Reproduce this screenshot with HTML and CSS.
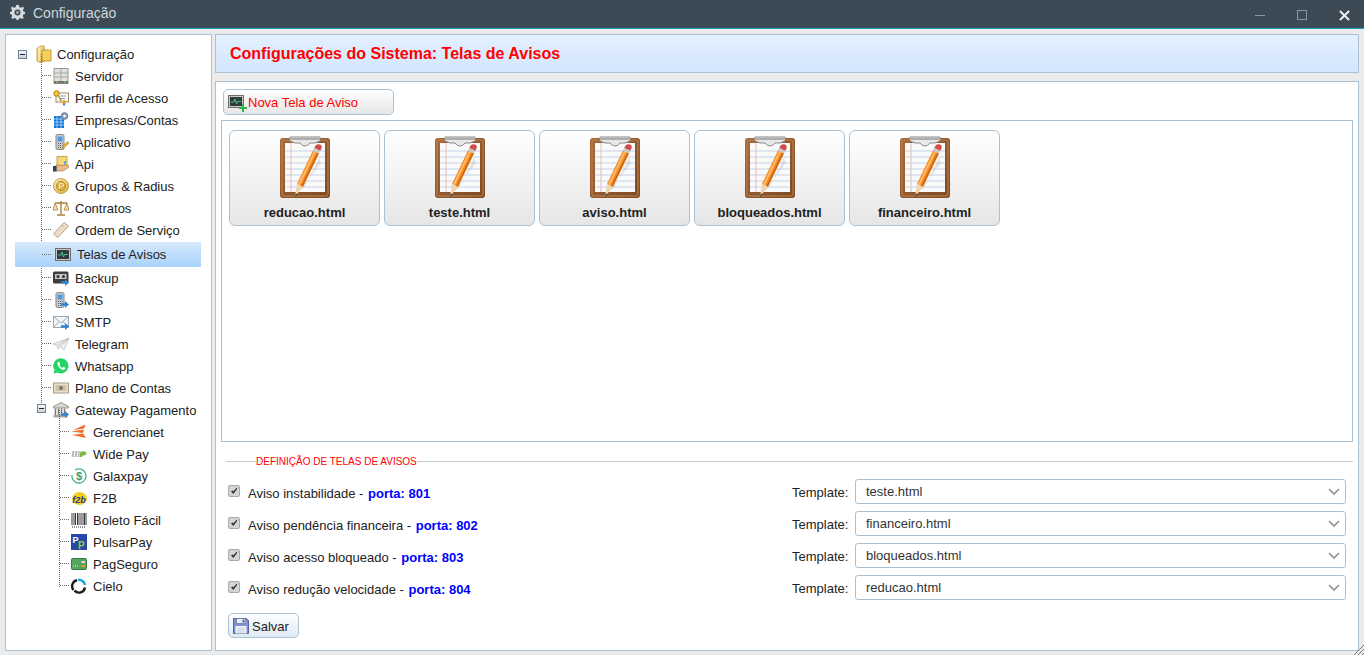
FILE: index.html
```html
<!DOCTYPE html>
<html lang="pt-BR">
<head>
    <meta charset="UTF-8">
    <meta name="viewport" content="width=device-width, initial-scale=1.0">
    <title>Configuração</title>
    <link rel="stylesheet" href="styles.css">
</head>
<body>
    <svg class="defs" width="0" height="0">
        <defs>
            <linearGradient id="wood" x1="0" y1="0" x2="1" y2="1">
                <stop offset="0" stop-color="#a8693a"/>
                <stop offset="1" stop-color="#7f4a22"/>
            </linearGradient>
            <linearGradient id="gold" x1="0" y1="0" x2="1" y2="1">
                <stop offset="0" stop-color="#fdeeb0"/>
                <stop offset="1" stop-color="#e0ae3c"/>
            </linearGradient>
            <symbol id="i-clipboard" viewBox="0 0 50 62">
                <rect x="0" y="2" width="50" height="60" rx="3" fill="url(#wood)"/>
                <rect x="2" y="4" width="46" height="56" rx="2" fill="none" stroke="#bb8654" stroke-width="1"/>
                <rect x="5" y="7" width="40" height="49" fill="#fafafa"/>
                <path d="M5 15H45M5 21H45M5 27H45M5 33H45M5 39H45M5 45H45M5 51H45" stroke="#c3d2ea" stroke-width="1"/>
                <path d="M11 7V56" stroke="#efb6b6" stroke-width="1"/>
                <path d="M10 1H40V5L35 7H30Q28 10 25 10Q22 10 20 7H15L10 5Z" fill="#e8e8e8" stroke="#8a8a8a" stroke-width="1"/>
                <path d="M11 3H39" stroke="#9a9a9a" stroke-width="1.500"/>
                <path d="M39 22L24 52L19 55L41 27" fill="#bdbdbd" opacity="0.4"/>
                <path d="M33 14.500L39 17.500L23 51L17 48Z" fill="#f58a1e"/>
                <path d="M35 15.500L19 48.700" stroke="#ffba6c" stroke-width="2"/>
                <path d="M38 17L22 50.500" stroke="#c9650f" stroke-width="1.500"/>
                <path d="M17 48L23 51L15 60.500Z" fill="#f0d7ae"/>
                <path d="M15.800 57.500L17.500 58.300L15 61.500Z" fill="#3a3a3a"/>
                <path d="M33 14.500L34.300 11.800L40.300 14.800L39 17.500Z" fill="#c8c8c8"/>
                <path d="M34.300 11.800L36 9Q39 7.500 41.500 9.500Q42.500 12 40.300 14.800Z" fill="#cf4b4b"/>
            </symbol>
            <symbol id="i-gear" viewBox="0 0 16 16">
                <path d="M6.500 0H9.500L10 2.300L11.800 3L13.700 1.700L15 3.500L13.700 5.300L14.300 7L16 7.500V9.500L14.200 10L13.500 11.800L14.700 13.700L13 15L11.200 13.800L9.500 14.400L9 16H7L6.500 14.400L4.700 13.800L3 15L1.300 13.700L2.500 11.800L1.800 10L0 9.500V7.500L1.700 7L2.300 5.300L1 3.500L2.300 1.700L4.200 3L6 2.300Z" fill="#d8dcdf"/>
                <circle cx="8" cy="8" r="3.200" fill="#3c4a54"/>
                <circle cx="8" cy="8" r="1.500" fill="#aab0b4"/>
            </symbol>
            <symbol id="i-folders" viewBox="0 0 16 18">
                <path d="M1 3L5 1H8L8.500 16L5 17.500L1 16Z" fill="url(#gold)" stroke="#b98a1e" stroke-width="0.800"/>
                <path d="M6 5H15V16H6Z" fill="#f5cf62" stroke="#b98a1e" stroke-width="0.800"/>
                <path d="M3 2V16" stroke="#fff6cf" stroke-width="1"/>
            </symbol>
            <symbol id="i-server" viewBox="0 0 16 16">
                <rect x="1" y="0.500" width="14" height="15" fill="#e2e2de" stroke="#97978f"/>
                <path d="M8 1V13M1 5H15M1 9H15" stroke="#a8a8a2"/>
                <rect x="1" y="13" width="14" height="2.500" fill="#74756e"/>
                <path d="M3 14H5M11 14H13" stroke="#8fdc6a"/>
            </symbol>
            <symbol id="i-cert" viewBox="0 0 16 16">
                <rect x="3" y="3" width="12.500" height="9" fill="#fbfbfb" stroke="#a08b63"/>
                <path d="M7 6H13M7 8.500H12" stroke="#7d9fc8"/>
                <circle cx="3.500" cy="3.500" r="2.700" fill="#f3c73e" stroke="#a67c10"/>
                <path d="M5 5.500L8 10L7 11" stroke="#b58c1a" stroke-width="1.300" fill="none"/>
                <circle cx="11" cy="12" r="2" fill="#e9a722"/>
                <path d="M10 13.500V16L11 15L12 16V13.500" fill="#3a7bc8"/>
            </symbol>
            <symbol id="i-building" viewBox="0 0 16 16">
                <rect x="1" y="4" width="10" height="12" fill="#0f73d6"/>
                <path d="M1 7H11M1 10H11M1 13H11M4 4V16M8 4V16" stroke="#b5dbfa" stroke-width="0.800"/>
                <circle cx="11.500" cy="4" r="3.300" fill="#8fa6bd" stroke="#5f7890"/>
                <circle cx="11.500" cy="4" r="1.200" fill="#fff"/>
            </symbol>
            <symbol id="i-phone" viewBox="0 0 16 16">
                <rect x="3" y="0.500" width="8" height="15" rx="1.500" fill="#c9cbce" stroke="#85878a"/>
                <rect x="4.500" y="2.500" width="5" height="5" fill="#4b9ee0"/>
                <path d="M5 9.500H6M7 9.500H8M9 9.500H9.500M5 11.500H6M7 11.500H8M9 11.500H9.500M5 13.500H6M7 13.500H8M9 13.500H9.500" stroke="#5d5f62"/>
            </symbol>
            <symbol id="i-pencil" viewBox="0 0 16 16">
                <path d="M9 15L10 12L14.500 7.500L16 9L11.500 13.500Z" fill="#f1b532" stroke="#9a6d14" stroke-width="0.500"/>
            </symbol>
            <symbol id="i-api" viewBox="0 0 16 16">
                <path d="M4 0.500H14V10H4Z" fill="#f4d77c" stroke="#c5a445"/>
                <path d="M3 9L8 9.500L15 9L16 11L10 15H3Z" fill="#f0b98a" stroke="#a36f40" stroke-width="0.600"/>
                <rect x="0" y="10" width="3.500" height="5.500" fill="#2e3f63"/>
                <path d="M12 5V8.500" stroke="#6aa3dc" stroke-width="2"/>
            </symbol>
            <symbol id="i-coin" viewBox="0 0 16 16">
                <circle cx="8" cy="8" r="7.500" fill="url(#gold)" stroke="#b8902f" stroke-width="0.800"/>
                <circle cx="8" cy="8" r="4.500" fill="#d9ae4c" stroke="#a98224" stroke-width="0.800"/>
                <path d="M6.500 11V5.500H9Q10.500 5.500 10.500 7T9 8.500H6.500" fill="none" stroke="#f6e6ae" stroke-width="1.100"/>
            </symbol>
            <symbol id="i-scales" viewBox="0 0 16 16">
                <path d="M8 1V14M4 15H12M2 3H14" stroke="#a7803c" stroke-width="1.400"/>
                <path d="M2 3L0 10H5ZM14 3L11 10H16Z" fill="#f3dfa8" stroke="#a7803c" stroke-width="0.800"/>
            </symbol>
            <symbol id="i-ticket" viewBox="0 0 16 16">
                <path d="M11 0.500L15.500 4L5 15.500L0.500 12Z" fill="#ecdccb" stroke="#b9a48e"/>
                <path d="M9 3L13 7" stroke="#b9a48e" stroke-dasharray="1 1"/>
            </symbol>
            <symbol id="i-monitor" viewBox="0 0 16 16">
                <rect x="0.500" y="1.500" width="15" height="12" fill="#c9c9c9" stroke="#6d6d6d"/>
                <rect x="2" y="3" width="12" height="9" fill="#2f3b3c"/>
                <path d="M3 8H6L7 5L8.500 10L9.500 7.500H13" fill="none" stroke="#58d79a" stroke-width="0.800"/>
            </symbol>
            <symbol id="i-arrow" viewBox="0 0 8 7">
                <path d="M0 2.200H4V0L8 3.500L4 7V4.800H0Z" fill="#2d86d8"/>
            </symbol>
            <symbol id="i-backup" viewBox="0 0 16 16">
                <rect x="0" y="1.500" width="15.500" height="12" rx="1.500" fill="#3d3d3d"/>
                <rect x="2" y="4" width="11.500" height="5" fill="#c6c6c6"/>
                <circle cx="5" cy="6.500" r="1.500" fill="#333"/>
                <circle cx="10.500" cy="6.500" r="1.500" fill="#333"/>
            </symbol>
            <symbol id="i-mail" viewBox="0 0 16 16">
                <rect x="0.500" y="2.500" width="15" height="11" fill="#f3f6fa" stroke="#9fa9b5"/>
                <path d="M1 3L8 9L15 3M1 13L6 7.500M15 13L10 7.500" fill="none" stroke="#9fa9b5"/>
            </symbol>
            <symbol id="i-plane" viewBox="0 0 16 16">
                <path d="M0 8L16 2L11 14L7 10.500L5 13L4.500 9.500Z" fill="#eef0ee" stroke="#b3b9b3" stroke-width="0.700"/>
                <path d="M4.500 9.500L16 2L7 10.500" fill="none" stroke="#b3b9b3" stroke-width="0.700"/>
            </symbol>
            <symbol id="i-whatsapp" viewBox="0 0 16 16">
                <path d="M8 0.300A7.600 7.600 0 1 1 4.300 14.600L0.500 15.700L1.500 12A7.600 7.600 0 0 1 8 0.300Z" fill="#25d366"/>
                <path d="M5.600 3.800C4.700 4.300 4.200 5.300 4.500 6.500C5.100 9 7.200 11.100 9.700 11.700C10.900 12 12 11.400 12.400 10.400C12.500 10.100 12.400 9.900 12.200 9.800L10.500 9C10.200 8.900 10 9 9.900 9.200L9.400 9.800C8.100 9.300 7 8.200 6.400 6.900L7 6.300C7.200 6.100 7.200 5.900 7.100 5.700L6.300 4C6.200 3.700 5.900 3.600 5.600 3.800Z" fill="#fff"/>
            </symbol>
            <symbol id="i-money" viewBox="0 0 16 16">
                <rect x="0.500" y="3" width="15" height="10" fill="#e8e0cf" stroke="#a69a84"/>
                <rect x="2.500" y="5" width="11" height="6" fill="#cfc4ab"/>
                <circle cx="8" cy="8" r="2" fill="#7f7661"/>
            </symbol>
            <symbol id="i-bank" viewBox="0 0 16 16">
                <path d="M8 0.500L15.500 4.500V6H0.500V4.500Z" fill="#d9d6cf" stroke="#77746d" stroke-width="0.700"/>
                <path d="M2.500 6.500V13M5.500 6.500V13M8.500 6.500V13M11.500 6.500V13" stroke="#7a7872" stroke-width="1.500"/>
                <rect x="0.500" y="13" width="14" height="2.500" fill="#a9a69e"/>
            </symbol>
            <symbol id="i-gn" viewBox="0 0 16 16">
                <path d="M14.500 0.500L13 4.500L2 6ZM13 5.500L12 9L0 7.500ZM12 9.500L15 14L1 11Z" fill="#f26d2b"/>
            </symbol>
            <symbol id="i-wp" viewBox="0 0 16 8">
                <path d="M1.500 1H3.500L2.500 7H0.500ZM4.500 1H6.500L5.500 7H3.500ZM7.500 1H9L8 7H6.500Z" fill="#b6b6b6"/>
                <path d="M8.500 6L9.500 1.500H14Q16 2 15.500 4Q14.500 5.500 11.500 5.500L11 7H8.500Z" fill="#7cb845"/>
            </symbol>
            <symbol id="i-gx" viewBox="0 0 16 16">
                <circle cx="8" cy="8" r="7" fill="none" stroke="#46b58b" stroke-width="1.300" stroke-dasharray="30 6" transform="rotate(-60 8 8)"/>
                <text class="icon-text gx" x="8" y="12" text-anchor="middle">$</text>
            </symbol>
            <symbol id="i-f2b" viewBox="0 0 16 16">
                <ellipse cx="8.500" cy="8.500" rx="7.500" ry="6.500" fill="#f6cc1f"/>
                <text class="icon-text f2b" x="8" y="12.500" text-anchor="middle">f2b</text>
            </symbol>
            <symbol id="i-barcode" viewBox="0 0 16 16">
                <path d="M1 1V13M3 1V13M4.500 1V13M6.500 1V13M8 1V13M10 1V13M12 1V13M13.500 1V13M15 1V13" stroke="#222" stroke-width="0.900"/>
                <path d="M1 15H15" stroke="#222" stroke-dasharray="1 1"/>
            </symbol>
            <symbol id="i-pulsar" viewBox="0 0 16 16">
                <rect width="16" height="16" fill="#2947a8"/>
                <text class="icon-text pa" x="1.500" y="9">P</text>
                <text class="icon-text pb" x="7" y="14.500">P</text>
            </symbol>
            <symbol id="i-pag" viewBox="0 0 16 16">
                <rect x="0.500" y="2.500" width="15" height="11" rx="1" fill="#57a55c" stroke="#3b7b42"/>
                <path d="M2 10H8" stroke="#d6ecd0" stroke-dasharray="1 1"/>
                <rect x="10.500" y="5" width="3.500" height="2" fill="#dcdcdc"/>
                <rect x="10.500" y="9" width="3.500" height="2" fill="#e89a2c"/>
            </symbol>
            <symbol id="i-cielo" viewBox="0 0 16 16">
                <path d="M2.500 12A6 6 0 0 1 6 2.300" fill="none" stroke="#1b1b1b" stroke-width="2.400"/>
                <path d="M7 2A6 6 0 0 1 14 7" fill="none" stroke="#12a5e3" stroke-width="2.400"/>
                <path d="M14 9.500A6 6 0 0 1 3.500 12.500" fill="none" stroke="#1b1b1b" stroke-width="2.400"/>
            </symbol>
            <symbol id="i-disk" viewBox="0 0 16 16">
                <path d="M0.500 0.500H13.500L15.500 2.500V15.500H0.500Z" fill="#7f8fd0" stroke="#57649e"/>
                <rect x="3.500" y="0.500" width="9" height="5" fill="#e9edf8" stroke="#57649e" stroke-width="0.600"/>
                <rect x="9.500" y="1.500" width="2" height="3" fill="#57649e"/>
                <rect x="2.500" y="8" width="11" height="7.500" fill="#f4f5fb"/>
                <path d="M4 10H12M4 12H12M4 14H12" stroke="#b5bcda" stroke-width="0.800"/>
            </symbol>
            <symbol id="i-check" viewBox="0 0 12 12">
                <path d="M2.500 6.500L4 5L5.200 6.500L9 2L10 3.200L5.200 9.500Z" fill="#333"/>
            </symbol>
        </defs>
    </svg>

    <header class="titlebar">
        <svg class="title-gear"><use href="#i-gear"/></svg>
        <span class="title-text">Configuração</span>
        <div class="win-controls">
            <span class="win-min"></span>
            <span class="win-max"></span>
            <svg class="win-close" viewBox="0 0 12 12"><path d="M1 1L11 11M11 1L1 11" stroke="#eee" stroke-width="2.200"/></svg>
        </div>
    </header>

    <div class="workspace">
        <aside class="side-panel">
            <div class="tree-root">
                <span class="toggle"></span>
                <svg class="root-ico"><use href="#i-folders"/></svg>
                <span>Configuração</span>
            </div>
            <ul class="tree">
                <li class="node"><svg class="ico"><use href="#i-server"/></svg>Servidor</li>
                <li class="node"><svg class="ico"><use href="#i-cert"/></svg>Perfil de Acesso</li>
                <li class="node"><svg class="ico"><use href="#i-building"/></svg>Empresas/Contas</li>
                <li class="node"><svg class="ico"><use href="#i-phone"/><use href="#i-pencil"/></svg>Aplicativo</li>
                <li class="node"><svg class="ico"><use href="#i-api"/></svg>Api</li>
                <li class="node"><svg class="ico"><use href="#i-coin"/></svg>Grupos &amp; Radius</li>
                <li class="node"><svg class="ico"><use href="#i-scales"/></svg>Contratos</li>
                <li class="node"><svg class="ico"><use href="#i-ticket"/></svg>Ordem de Serviço</li>
                <li class="node selected"><svg class="ico"><use href="#i-monitor"/></svg>Telas de Avisos</li>
                <li class="node"><svg class="ico"><use href="#i-backup"/><use href="#i-arrow" x="8" y="9" width="8" height="7"/></svg>Backup</li>
                <li class="node"><svg class="ico"><use href="#i-phone"/><use href="#i-arrow" x="8" y="9" width="8" height="7"/></svg>SMS</li>
                <li class="node"><svg class="ico"><use href="#i-mail"/><use href="#i-arrow" x="8" y="9" width="8" height="7"/></svg>SMTP</li>
                <li class="node"><svg class="ico"><use href="#i-plane"/></svg>Telegram</li>
                <li class="node"><svg class="ico"><use href="#i-whatsapp"/></svg>Whatsapp</li>
                <li class="node"><svg class="ico"><use href="#i-money"/></svg>Plano de Contas</li>
                <li class="node group">
                    <span class="toggle"></span>
                    <svg class="ico"><use href="#i-bank"/><use href="#i-arrow" x="8" y="9" width="8" height="7"/></svg>Gateway Pagamento
                </li>
            </ul>
            <ul class="tree sub">
                <li class="node"><svg class="ico"><use href="#i-gn"/></svg>Gerencianet</li>
                <li class="node"><svg class="ico"><use href="#i-wp"/></svg>Wide Pay</li>
                <li class="node"><svg class="ico"><use href="#i-gx"/></svg>Galaxpay</li>
                <li class="node"><svg class="ico"><use href="#i-f2b"/></svg>F2B</li>
                <li class="node"><svg class="ico"><use href="#i-barcode"/></svg>Boleto Fácil</li>
                <li class="node"><svg class="ico"><use href="#i-pulsar"/></svg>PulsarPay</li>
                <li class="node"><svg class="ico"><use href="#i-pag"/></svg>PagSeguro</li>
                <li class="node"><svg class="ico"><use href="#i-cielo"/></svg>Cielo</li>
            </ul>
        </aside>

        <main class="content">
            <div class="page-head">Configurações do Sistema: Telas de Avisos</div>
            <section class="page-body">
                <button class="btn btn-new">
                    <svg class="ico-btn"><use href="#i-monitor"/></svg>
                    <svg class="plus" viewBox="0 0 8 8"><path d="M3 0H5V3H8V5H5V8H3V5H0V3H3Z" fill="#2fb34a"/></svg>
                    Nova Tela de Aviso
                </button>
                <div class="file-box">
                    <div class="file-card"><svg class="clip"><use href="#i-clipboard"/></svg>reducao.html</div>
                    <div class="file-card"><svg class="clip"><use href="#i-clipboard"/></svg>teste.html</div>
                    <div class="file-card"><svg class="clip"><use href="#i-clipboard"/></svg>aviso.html</div>
                    <div class="file-card"><svg class="clip"><use href="#i-clipboard"/></svg>bloqueados.html</div>
                    <div class="file-card"><svg class="clip"><use href="#i-clipboard"/></svg>financeiro.html</div>
                </div>
                <div class="legend"><span>DEFINIÇÃO DE TELAS DE AVISOS</span></div>
                <div class="settings">
                    <div class="set-row">
                        <span class="checkbox"><svg viewBox="0 0 12 12"><use href="#i-check"/></svg></span>
                        <span class="set-label">Aviso instabilidade - <b>porta: 801</b></span>
                        <span class="tpl-label">Template:</span>
                        <div class="select-wrap">
                            <select class="select"><option>teste.html</option></select>
                            <svg class="chevron" viewBox="0 0 12 7"><path d="M1 1L6 6L11 1" fill="none" stroke="#8a8f94" stroke-width="1.600"/></svg>
                        </div>
                    </div>
                    <div class="set-row">
                        <span class="checkbox"><svg viewBox="0 0 12 12"><use href="#i-check"/></svg></span>
                        <span class="set-label">Aviso pendência financeira - <b>porta: 802</b></span>
                        <span class="tpl-label">Template:</span>
                        <div class="select-wrap">
                            <select class="select"><option>financeiro.html</option></select>
                            <svg class="chevron" viewBox="0 0 12 7"><path d="M1 1L6 6L11 1" fill="none" stroke="#8a8f94" stroke-width="1.600"/></svg>
                        </div>
                    </div>
                    <div class="set-row">
                        <span class="checkbox"><svg viewBox="0 0 12 12"><use href="#i-check"/></svg></span>
                        <span class="set-label">Aviso acesso bloqueado - <b>porta: 803</b></span>
                        <span class="tpl-label">Template:</span>
                        <div class="select-wrap">
                            <select class="select"><option>bloqueados.html</option></select>
                            <svg class="chevron" viewBox="0 0 12 7"><path d="M1 1L6 6L11 1" fill="none" stroke="#8a8f94" stroke-width="1.600"/></svg>
                        </div>
                    </div>
                    <div class="set-row">
                        <span class="checkbox"><svg viewBox="0 0 12 12"><use href="#i-check"/></svg></span>
                        <span class="set-label">Aviso redução velocidade - <b>porta: 804</b></span>
                        <span class="tpl-label">Template:</span>
                        <div class="select-wrap">
                            <select class="select"><option>reducao.html</option></select>
                            <svg class="chevron" viewBox="0 0 12 7"><path d="M1 1L6 6L11 1" fill="none" stroke="#8a8f94" stroke-width="1.600"/></svg>
                        </div>
                    </div>
                </div>
                <button class="btn btn-save"><svg class="ico-btn save-ico"><use href="#i-disk"/></svg><span class="save-text">Salvar</span></button>
            </section>
        </main>
    </div>
    <svg class="grip" viewBox="0 0 10 10"><path d="M0 10L10 0M4 10L10 4M8 10L10 8" stroke="#6f7a82" stroke-width="1"/></svg>
</body>
</html>
```

FILE: styles.css
```css
* {
    box-sizing: border-box;
}
html, body {
    height: 100%;
}
body {
    margin: 0;
    height: 655px;
    overflow: hidden;
    display: flex;
    flex-direction: column;
    background-color: #ebebeb;
    color: #222;
    font-family: "Liberation Sans", Arial, sans-serif;
    font-size: 13px;
    position: relative;
}
.defs {
    position: absolute;
}
.icon-text {
    font-family: "Liberation Sans", Arial, sans-serif;
    font-weight: bold;
}
.icon-text.gx { font-size: 11px; fill: #2f9f77; }
.icon-text.f2b { font-size: 9px; fill: #27408b; font-style: italic; }
.icon-text.pa { font-size: 9px; fill: #fff; }
.icon-text.pb { font-size: 10px; fill: #8ccf3f; }

/* title bar */
.titlebar {
    flex: none;
    height: 29px;
    display: flex;
    align-items: center;
    padding-left: 10px;
    background-color: #3c4a55;
    border-bottom: 1px solid #17a2b8;
    color: #cfd6db;
    font-size: 14px;
}
.title-gear {
    width: 15px;
    height: 15px;
    margin-top: -3px;
}
.title-text {
    margin-left: 8px;
    margin-top: -2px;
}
.win-controls {
    margin-left: auto;
    padding-top: 2px;
    display: flex;
    align-items: center;
}
.win-min {
    width: 10px;
    height: 1px;
    background: #8d979e;
    margin-right: 32px;
}
.win-max {
    width: 10px;
    height: 10px;
    border: 1px solid #8d979e;
    margin-right: 32px;
}
.win-close {
    width: 11px;
    height: 11px;
    margin-right: 14px;
}

.workspace {
    flex: 1;
    min-height: 0;
    display: flex;
    gap: 3px;
    padding: 5px 5px 4px 5px;
}

/* tree */
.side-panel {
    flex: none;
    width: 207px;
    background: #fff;
    border: 1px solid #a9c2d6;
    padding-top: 8px;
}
.tree-root {
    height: 22px;
    display: flex;
    align-items: center;
    padding-left: 12px;
    position: relative;
}
.toggle {
    width: 9px;
    height: 9px;
    border: 1px solid #6d8193;
    background: linear-gradient(#f4f7fa, #c9d4dd);
    position: relative;
    flex: none;
}
.toggle::before {
    content: '';
    position: absolute;
    left: 1px;
    top: 3px;
    width: 5px;
    height: 1px;
    background: #223;
}
.root-ico {
    width: 16px;
    height: 18px;
    margin-left: 9px;
    margin-right: 5px;
}
.ico {
    width: 16px;
    height: 16px;
    flex: none;
    overflow: visible;
}
.tree {
    list-style: none;
    margin: 0;
    padding: 0;
    position: relative;
}
.tree::before {
    content: '';
    position: absolute;
    left: 35px;
    top: -11px;
    bottom: 10px;
    border-left: 1px dotted #666;
}
.node {
    height: 22px;
    display: flex;
    align-items: center;
    padding-left: 47px;
    position: relative;
}
.node .ico {
    margin-right: 6px;
}
.node::before {
    content: '';
    position: absolute;
    left: 36px;
    top: 10px;
    width: 9px;
    border-top: 1px dotted #666;
}
.node.selected {
    height: 25px;
    margin-top: 1px;
    margin-left: 9px;
    width: 186px;
    padding-left: 40px;
    background: linear-gradient(#d6e9fd, #a9d2fb);
}
.node.selected::before {
    left: 27px;
    top: 12px;
}
.node.group::before {
    display: none;
}
.node.group .toggle {
    position: absolute;
    left: 31px;
    top: 5px;
    z-index: 1;
}
.tree.sub::before {
    left: 53px;
    top: -11px;
}
.tree.sub .node {
    padding-left: 65px;
}
.tree.sub .node::before {
    left: 54px;
}

/* right side */
.content {
    flex: 1;
    min-width: 0;
    display: flex;
    flex-direction: column;
    gap: 8px;
}
.page-head {
    height: 39px;
    display: flex;
    align-items: center;
    padding-left: 14px;
    background: linear-gradient(#e3f0ff, #d3e6fd);
    border: 1px solid #a9c2d6;
    color: #f00;
    font-size: 16px;
    font-weight: bold;
}
.page-body {
    flex: 1;
    background: #fff;
    border: 1px solid #a9c2d6;
    padding: 7px 5px 0;
    display: flex;
    flex-direction: column;
    align-items: flex-start;
}
.btn {
    font-family: inherit;
    font-size: 13px;
    display: flex;
    align-items: center;
    border: 1px solid #a9c2d6;
    border-radius: 5px;
    background: linear-gradient(#fff, #e6e6e6);
    padding: 0;
    position: relative;
}
.btn-new {
    width: 171px;
    height: 26px;
    margin-left: 2px;
    padding-left: 4px;
    color: #f00;
}
.ico-btn {
    width: 16px;
    height: 16px;
    margin-right: 4px;
}
.plus {
    position: absolute;
    left: 15px;
    top: 14px;
    width: 8px;
    height: 8px;
}
.file-box {
    width: 100%;
    height: 322px;
    margin-top: 5px;
    border: 1px solid #a9c2d6;
    padding: 9px 7px;
    display: flex;
    align-items: flex-start;
    gap: 4px;
}
.file-card {
    width: 151px;
    height: 96px;
    display: flex;
    flex-direction: column;
    align-items: center;
    border: 1px solid #a9c2d6;
    border-radius: 6px;
    background: linear-gradient(#fff, #e6e6e6);
    padding-top: 5px;
    font-weight: bold;
    color: #222;
}
.clip {
    width: 50px;
    height: 62px;
    margin-bottom: 7px;
}
.legend {
    width: 100%;
    margin-top: 13px;
    height: 12px;
    display: flex;
    align-items: center;
    padding-left: 5px;
    font-size: 10px;
    color: #f00;
}
.legend span {
    padding-left: 30px;
    display: flex;
    align-items: center;
    flex: 1;
    background: linear-gradient(#c8c8c8, #c8c8c8) left center / 30px 1px no-repeat;
}
.legend span::after {
    content: '';
    flex: 1;
    height: 1px;
    background: #c8c8c8;
}
.settings {
    width: 100%;
    margin-top: 12px;
    display: flex;
    flex-direction: column;
    gap: 7px;
}
.set-row {
    height: 25px;
    display: flex;
    align-items: center;
    padding-left: 7px;
}
.checkbox {
    width: 12px;
    height: 12px;
    flex: none;
    margin-top: -2px;
    border: 1px solid #a8a8a8;
    border-radius: 2px;
    background: #d4d4d4;
    display: flex;
    margin-right: 8px;
}
.checkbox svg {
    width: 10px;
    height: 10px;
}
.set-label {
    width: 544px;
    flex: none;
    padding-top: 4px;
}
.set-label b {
    color: #00f;
    margin-left: 1px;
}
.tpl-label {
    width: 63px;
    flex: none;
    padding-top: 2px;
}
.select-wrap {
    position: relative;
    width: 491px;
    height: 25px;
}
.select {
    appearance: none;
    width: 100%;
    height: 100%;
    border: 1px solid #a9c2d6;
    border-radius: 3px;
    background: #fff;
    padding: 0 10px;
    font-family: inherit;
    font-size: 13px;
    color: #333;
}
.chevron {
    position: absolute;
    right: 6px;
    top: 9px;
    width: 12px;
    height: 7px;
    pointer-events: none;
}
.btn-save {
    width: 71px;
    height: 25px;
    margin-top: 13px;
    margin-left: 7px;
    padding-left: 4px;
    color: #222;
    background: linear-gradient(#fff, #dfe9f3);
}
.save-ico {
    margin-right: 3px;
}
.save-text {
    padding-top: 2px;
}
.grip {
    position: absolute;
    right: 0;
    bottom: 0;
    width: 10px;
    height: 10px;
}
```
